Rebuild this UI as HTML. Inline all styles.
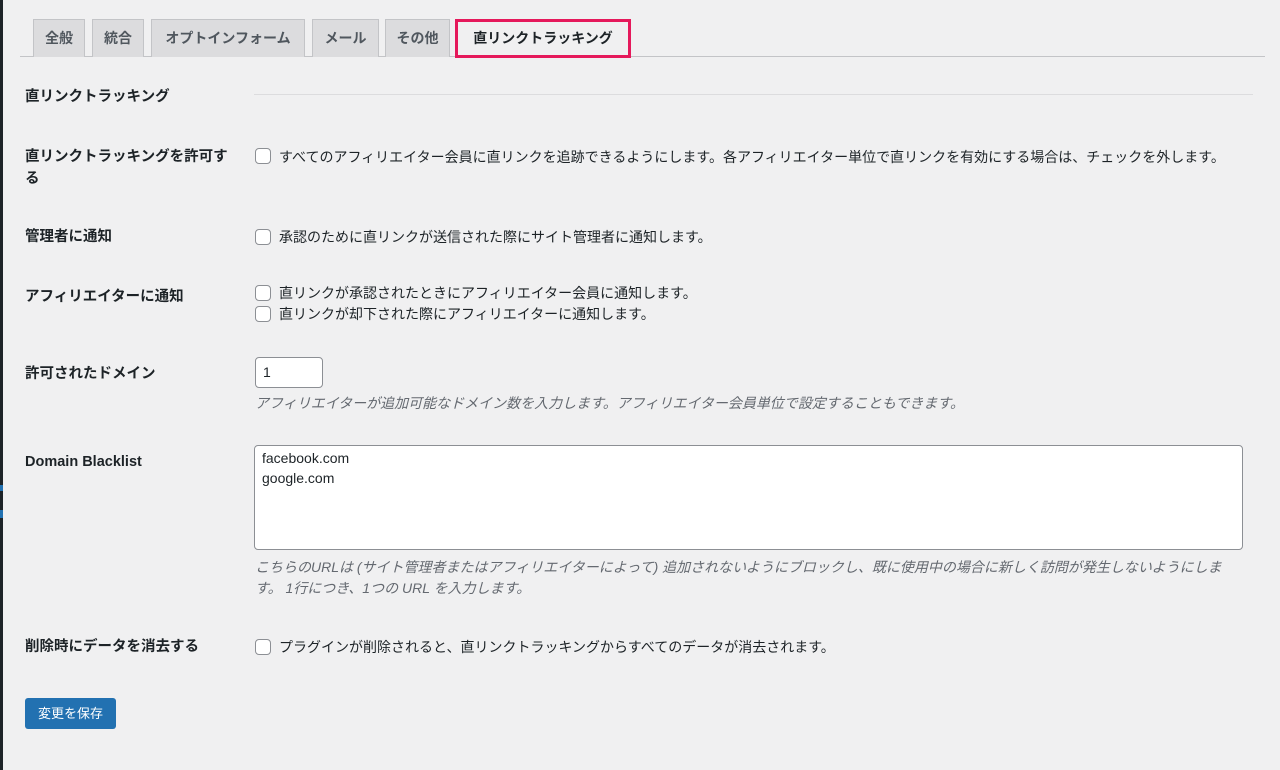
<!DOCTYPE html>
<html><head><meta charset="utf-8"><style>
*{box-sizing:border-box;margin:0;padding:0}
body{width:1280px;height:770px;background:#f0f0f1;font-family:"Liberation Sans","Noto Sans CJK JP",sans-serif;font-size:14px;color:#1d2327;position:relative;overflow:hidden}
.a{position:absolute}
.tab{position:absolute;top:19px;height:38px;background:#dcdcde;border:1px solid #c3c4c7;border-bottom:none;font-weight:bold;font-size:14px;color:#50575e;line-height:37px;text-align:center;white-space:nowrap}
.lbl{position:absolute;left:25px;font-weight:bold;font-size:14.5px;line-height:22px;white-space:nowrap}
.cb{position:absolute;left:255px;width:16px;height:16px;border:1px solid #8c8f94;border-radius:4px;background:#fff}
.t{position:absolute;left:279px;font-size:14px;line-height:20px;white-space:nowrap}
.d{position:absolute;left:255px;font-style:italic;color:#646970;font-size:14px;line-height:21px}
</style></head><body>
<div class="a" style="left:0;top:0;width:3px;height:770px;background:#1d2327"></div>
<div class="a" style="left:0;top:485px;width:3px;height:6px;background:#2271b1"></div>
<div class="a" style="left:0;top:510px;width:3px;height:8px;background:#2271b1"></div>
<div class="a" style="left:20px;top:56px;width:1245px;height:1px;background:#c3c4c7"></div>
<div class="tab" style="left:33px;width:52px">全般</div>
<div class="tab" style="left:92px;width:52px">統合</div>
<div class="tab" style="left:151px;width:154px">オプトインフォーム</div>
<div class="tab" style="left:312px;width:67px">メール</div>
<div class="tab" style="left:385px;width:65px">その他</div>
<div class="a" style="left:455px;top:19px;width:176px;height:39px;border:3px solid #e5195b;background:#f0f0f1;font-weight:bold;font-size:14px;line-height:33px;text-align:center;color:#1d2327;white-space:nowrap">直リンクトラッキング</div>
<div class="lbl" style="top:86px">直リンクトラッキング</div>
<div class="a" style="left:254px;top:94px;width:999px;height:1px;background:#dcdcde"></div>
<div class="lbl" style="top:146px;width:212px;white-space:normal;line-height:22px">直リンクトラッキングを許可する</div>
<div class="cb" style="top:148px"></div>
<div class="t" style="top:146px;left:254px;width:982px;text-indent:25px;white-space:normal;line-height:22px">すべてのアフィリエイター会員に直リンクを追跡できるようにします。各アフィリエイター単位で直リンクを有効にする場合は、チェックを外します。</div>
<div class="lbl" style="top:226px">管理者に通知</div>
<div class="cb" style="top:229px"></div><div class="t" style="top:227px">承認のために直リンクが送信された際にサイト管理者に通知します。</div>
<div class="lbl" style="top:286px">アフィリエイターに通知</div>
<div class="cb" style="top:285px"></div><div class="t" style="top:283px">直リンクが承認されたときにアフィリエイター会員に通知します。</div>
<div class="cb" style="top:306px"></div><div class="t" style="top:304px">直リンクが却下された際にアフィリエイターに通知します。</div>
<div class="lbl" style="top:363px">許可されたドメイン</div>
<div class="a" style="left:255px;top:357px;width:68px;height:31px;border:1px solid #8c8f94;border-radius:4px;background:#fff;padding:6px 7px;font-size:14px">1</div>
<div class="d" style="top:393px;white-space:nowrap">アフィリエイターが追加可能なドメイン数を入力します。アフィリエイター会員単位で設定することもできます。</div>
<div class="lbl" style="top:451px">Domain Blacklist</div>
<div class="a" style="left:254px;top:445px;width:989px;height:105px;border:1px solid #8c8f94;border-radius:4px;background:#fff;padding:2px 7px;font-size:14px;line-height:20px">facebook.com<br>google.com</div>
<div class="d" style="top:557px;width:990px">こちらのURLは (サイト管理者またはアフィリエイターによって) 追加されないようにブロックし、既に使用中の場合に新しく訪問が発生しないようにします。 1行につき、1つの URL を入力します。</div>
<div class="lbl" style="top:636px">削除時にデータを消去する</div>
<div class="cb" style="top:639px"></div><div class="t" style="top:637px">プラグインが削除されると、直リンクトラッキングからすべてのデータが消去されます。</div>
<div class="a" style="left:25px;top:698px;width:91px;height:31px;background:#2271b1;border-radius:3px;color:#fff;font-size:13px;line-height:31px;text-align:center">変更を保存</div>
</body></html>
